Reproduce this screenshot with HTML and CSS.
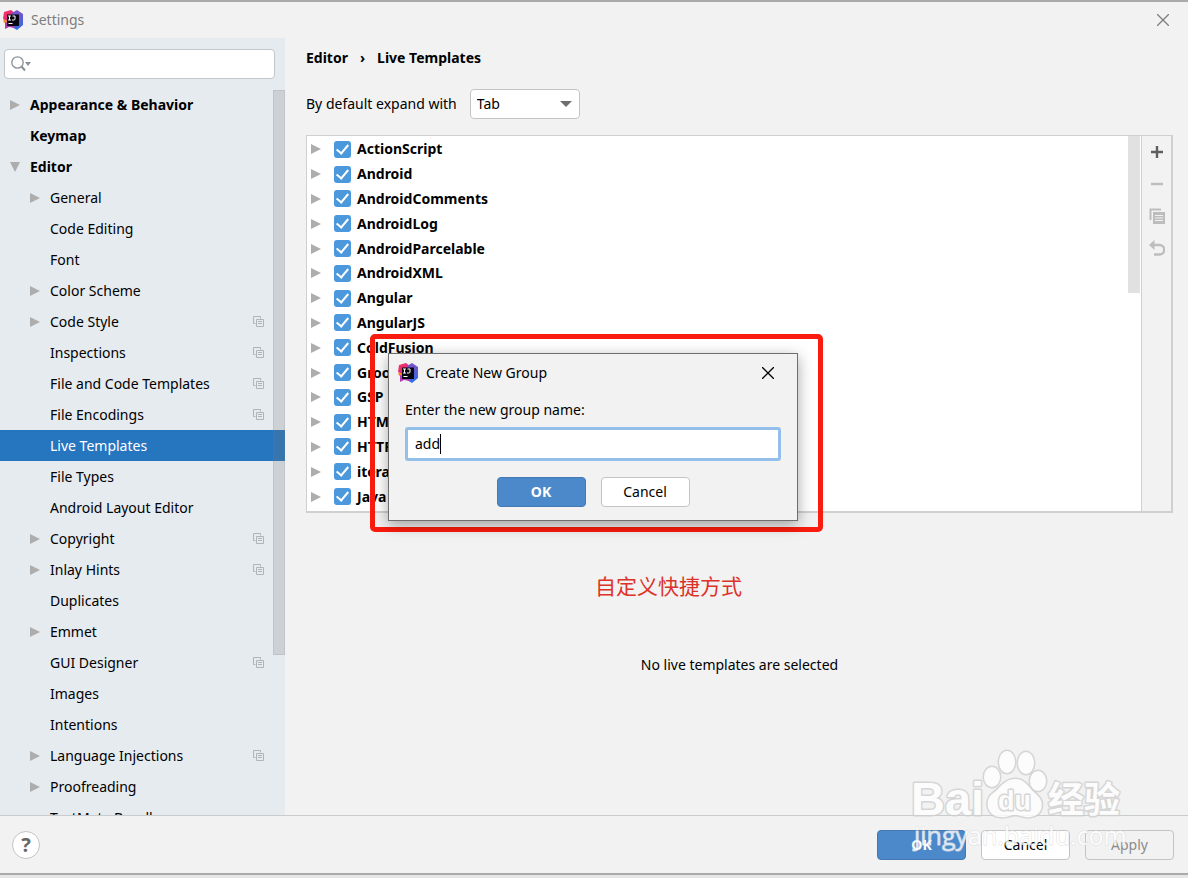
FILE: index.html
```html
<!DOCTYPE html>
<html lang="en">
<head>
<meta charset="utf-8">
<title>Settings</title>
<link rel="stylesheet" href="styles.css">
</head>
<body>
<svg class="defs" aria-hidden="true">
  <defs>
    <linearGradient id="flame" x1="0" y1="0" x2="1" y2="1"><stop offset="0" stop-color="#ff3158"/><stop offset="1" stop-color="#c62a9b"/></linearGradient>
    <linearGradient id="sea" x1="0" y1="0" x2="0" y2="1"><stop offset="0" stop-color="#7d50c8"/><stop offset="1" stop-color="#2d6fe6"/></linearGradient>
  </defs>
  <symbol id="logo" viewBox="0 0 20 20">
    <path d="M0 11 3 7 6 12 4 16Z" fill="#f98a2b"/>
    <path d="M1 2 8 0 13 4 7 12 0 9Z" fill="url(#flame)"/>
    <path d="M9 3 14 0 20 4V15L14 20 9 17Z" fill="url(#sea)"/>
    <path d="M2 12 10 14 12 18 6 17 2 19Z" fill="#b238b5"/>
    <path d="M4 4.500h12v11.500H4z" fill="#080610"/>
    <path d="M5 6h3M6.500 6v4M5 10h3M9.500 6h2.500v3q0 1-1.200 1H9M5.500 13.500h4" fill="none" stroke="#fff" stroke-width="1"/>
  </symbol>
  <symbol id="right" viewBox="0 0 10 10"><path d="M0 0 10 5 0 10Z" fill="#adadad"/></symbol>
  <symbol id="down" viewBox="0 0 10 10"><path d="M0 0H10L5 10Z" fill="#adadad"/></symbol>
  <symbol id="copy" viewBox="0 0 11 11"><path d="M2.500 7.500H.500V.500H7.500V2.500M3.500 3.500h7v7h-7zM5 5.500h4M5 7.500h4" fill="none" stroke="#adb4ba"/></symbol>
  <symbol id="close" viewBox="0 0 12 12"><path d="M0 0 12 12M12 0 0 12" fill="none" stroke="currentColor" stroke-width="1.300"/></symbol>
</svg>

<div class="window">
  <header class="titlebar">
    <svg class="logo"><use href="#logo"/></svg>
    <h1>Settings</h1>
    <button class="close" aria-label="Close settings"><svg><use href="#close"/></svg></button>
  </header>

  <div class="body">
    <aside class="sidebar">
      <div class="search">
        <svg viewBox="0 0 20 16" aria-hidden="true"><circle cx="6.500" cy="6.500" r="5.700" fill="none" stroke="#8a9299" stroke-width="1.300"/><path d="M10.500 10.500 14 14.500" stroke="#8a9299" stroke-width="2"/><path d="M14 6h6l-3 4z" fill="#8a9299"/></svg>
        <input type="text" aria-label="Search settings">
      </div>
      <div class="tree-area">
        <ul class="tree">
          <li class="top"><svg class="arrow"><use href="#right"/></svg>Appearance &amp; Behavior</li>
          <li class="top"><i class="arrow"></i>Keymap</li>
          <li class="top"><svg class="arrow"><use href="#down"/></svg>Editor</li>
          <li><svg class="arrow"><use href="#right"/></svg>General</li>
          <li><i class="arrow"></i>Code Editing</li>
          <li><i class="arrow"></i>Font</li>
          <li><svg class="arrow"><use href="#right"/></svg>Color Scheme</li>
          <li><svg class="arrow"><use href="#right"/></svg>Code Style<svg class="copy"><use href="#copy"/></svg></li>
          <li><i class="arrow"></i>Inspections<svg class="copy"><use href="#copy"/></svg></li>
          <li><i class="arrow"></i>File and Code Templates<svg class="copy"><use href="#copy"/></svg></li>
          <li><i class="arrow"></i>File Encodings<svg class="copy"><use href="#copy"/></svg></li>
          <li class="selected"><i class="arrow"></i>Live Templates</li>
          <li><i class="arrow"></i>File Types</li>
          <li><i class="arrow"></i>Android Layout Editor</li>
          <li><svg class="arrow"><use href="#right"/></svg>Copyright<svg class="copy"><use href="#copy"/></svg></li>
          <li><svg class="arrow"><use href="#right"/></svg>Inlay Hints<svg class="copy"><use href="#copy"/></svg></li>
          <li><i class="arrow"></i>Duplicates</li>
          <li><svg class="arrow"><use href="#right"/></svg>Emmet</li>
          <li><i class="arrow"></i>GUI Designer<svg class="copy"><use href="#copy"/></svg></li>
          <li><i class="arrow"></i>Images</li>
          <li><i class="arrow"></i>Intentions</li>
          <li><svg class="arrow"><use href="#right"/></svg>Language Injections<svg class="copy"><use href="#copy"/></svg></li>
          <li><svg class="arrow"><use href="#right"/></svg>Proofreading</li>
          <li><i class="arrow"></i>TextMate Bundles</li>
        </ul>
        <div class="thumb"></div>
      </div>
    </aside>

    <main class="content">
      <h2 class="crumbs"><span>Editor</span><span class="sep">›</span><span>Live Templates</span></h2>
      <div class="expand">
        <label for="expand">By default expand with</label>
        <div class="select">
          <select id="expand"><option>Tab</option><option>Enter</option><option>Space</option></select>
          <svg viewBox="0 0 12 6" aria-hidden="true"><path d="M0 0H12L6 6Z" fill="#6e6e6e"/></svg>
        </div>
      </div>
      <section class="panel">
        <ul class="templates">
          <li><svg class="arrow"><use href="#right"/></svg><label><input type="checkbox" checked>ActionScript</label></li>
          <li><svg class="arrow"><use href="#right"/></svg><label><input type="checkbox" checked>Android</label></li>
          <li><svg class="arrow"><use href="#right"/></svg><label><input type="checkbox" checked>AndroidComments</label></li>
          <li><svg class="arrow"><use href="#right"/></svg><label><input type="checkbox" checked>AndroidLog</label></li>
          <li><svg class="arrow"><use href="#right"/></svg><label><input type="checkbox" checked>AndroidParcelable</label></li>
          <li><svg class="arrow"><use href="#right"/></svg><label><input type="checkbox" checked>AndroidXML</label></li>
          <li><svg class="arrow"><use href="#right"/></svg><label><input type="checkbox" checked>Angular</label></li>
          <li><svg class="arrow"><use href="#right"/></svg><label><input type="checkbox" checked>AngularJS</label></li>
          <li><svg class="arrow"><use href="#right"/></svg><label><input type="checkbox" checked>ColdFusion</label></li>
          <li><svg class="arrow"><use href="#right"/></svg><label><input type="checkbox" checked>Groovy</label></li>
          <li><svg class="arrow"><use href="#right"/></svg><label><input type="checkbox" checked>GSP</label></li>
          <li><svg class="arrow"><use href="#right"/></svg><label><input type="checkbox" checked>HTML</label></li>
          <li><svg class="arrow"><use href="#right"/></svg><label><input type="checkbox" checked>HTTP</label></li>
          <li><svg class="arrow"><use href="#right"/></svg><label><input type="checkbox" checked>iterations</label></li>
          <li><svg class="arrow"><use href="#right"/></svg><label><input type="checkbox" checked>Java</label></li>
        </ul>
        <div class="track"><div class="list-thumb"></div></div>
        <div class="tools">
          <button aria-label="Add"><svg viewBox="0 0 16 16"><path d="M8 2v12M2 8h12" stroke="#5f5f5f" stroke-width="2.400"/></svg></button>
          <button aria-label="Remove"><svg viewBox="0 0 16 16"><path d="M2 8h12" stroke="#bdbdbd" stroke-width="2.400"/></svg></button>
          <button aria-label="Duplicate"><svg viewBox="0 0 16 16"><path d="M1.500 12V1.500H12" fill="none" stroke="#bdbdbd" stroke-width="2"/><path d="M4 4h12v12H4z" fill="#bdbdbd"/><path d="M6 7.500h8M6 10h8M6 12.500h8" stroke="#f2f2f2"/></svg></button>
          <button aria-label="Revert"><svg viewBox="0 0 16 16"><path d="M3 5h7.500a4.500 4.500 0 0 1 0 9.500H5" fill="none" stroke="#bdbdbd" stroke-width="2.400"/><path d="M0 5 5.500 0v10Z" fill="#bdbdbd"/></svg></button>
        </div>
      </section>
      <p class="empty">No live templates are selected</p>
    </main>
  </div>

  <footer class="footer">
    <button class="help" aria-label="Help">?</button>
    <button class="btn primary">OK</button>
    <button class="btn">Cancel</button>
    <button class="btn" disabled>Apply</button>
  </footer>
  <div class="desktop"></div>

  <div class="highlight">
    <div class="dialog" role="dialog" aria-labelledby="dialog-title">
      <header class="dialog-head">
        <svg class="logo"><use href="#logo"/></svg>
        <h2 id="dialog-title">Create New Group</h2>
        <button class="close" aria-label="Close dialog"><svg><use href="#close"/></svg></button>
      </header>
      <label for="group">Enter the new group name:</label>
      <div class="field"><input id="group" type="text" value="add"><i class="caret"></i></div>
      <div class="actions">
        <button class="btn primary">OK</button>
        <button class="btn">Cancel</button>
      </div>
    </div>
  </div>
  <p class="caption" lang="zh">自定义快捷方式</p>

  <svg class="watermark" viewBox="0 0 220 110" aria-label="Baidu">
    <g fill="#fff" stroke="#cfcfcf" stroke-width="3" paint-order="stroke" stroke-linejoin="round">
      <text x="-1" y="67" class="wm-bold">Bai</text>
      <ellipse cx="80" cy="29" rx="8" ry="10"/>
      <ellipse cx="95" cy="14" rx="8" ry="11"/>
      <ellipse cx="114" cy="15" rx="8" ry="11"/>
      <ellipse cx="126" cy="33" rx="8" ry="10"/>
      <path d="M103 31C92 31 89 40 80 46 72 53 75 69 89 69 95 70 98 67 103 67S112 70 118 69C131 68 133 54 125 47 116 40 114 31 103 31Z"/>
      <text x="86" y="62" class="wm-du">du</text>
      <text x="136" y="65" class="wm-cjk">经验</text>
    </g>
    <text x="2" y="97" class="wm-url">jingyan.baidu.com</text>
  </svg>
</div>
</body>
</html>
```
FILE: styles.css
```css
* { box-sizing: border-box; }

body {
  margin: 0;
  background: #f2f2f2;
  color: #000;
  font: 14px/20px "Noto Sans", "Open Sans", sans-serif;
}

h1, h2, p, ul { margin: 0; padding: 0; font-size: inherit; font-weight: normal; }
ul { list-style: none; }
button, input, select { font: inherit; color: inherit; }
button { padding: 0; border: 0; background: none; }
svg { display: block; flex: none; }
.defs { position: absolute; width: 0; height: 0; }

.window {
  position: relative;
  display: flex;
  flex-direction: column;
  height: 100vh;
  overflow: hidden;
  border-top: 2px solid #a9aaaa;
}

.titlebar {
  display: flex;
  align-items: center;
  flex: none;
  height: 36px;
  padding: 0 19px 0 3px;
  color: #7e7e7e;
}
.logo { width: 20px; height: 20px; margin-right: 8px; }
.close { margin-left: auto; }
.close svg { width: 12px; height: 12px; }

.body { display: flex; flex: 1; min-height: 0; }

.sidebar {
  display: flex;
  flex-direction: column;
  flex: none;
  width: 285px;
  padding-top: 11px;
  background: #e6ebf0;
}
.search {
  display: flex;
  align-items: center;
  flex: none;
  height: 30px;
  margin: 0 10px 10px 4px;
  padding-left: 6px;
  border: 1px solid #c3c6c9;
  border-radius: 4px;
  background: #fff;
}
.search svg { width: 20px; height: 16px; }
.search input { flex: 1; min-width: 0; border: 0; outline: 0; background: none; }

.tree-area { position: relative; flex: 1; min-height: 0; overflow: hidden; }
.tree li {
  display: flex;
  align-items: center;
  height: 31px;
  padding: 0 21px 0 30px;
}
.tree .top { padding-left: 10px; font-weight: 700; }
.tree .selected { background: #2675bf; color: #fff; }
.arrow { flex: none; width: 10px; height: 10px; margin-right: 10px; }
.copy { width: 11px; height: 11px; margin-left: auto; }
.thumb {
  position: absolute;
  top: 1px;
  right: 0;
  width: 12px;
  height: 565px;
  border: 1px solid rgba(120, 120, 120, .15);
  background: rgba(120, 120, 120, .22);
}

.content { flex: 1; min-width: 0; padding: 10px 15px 0 21px; }
.crumbs { display: flex; gap: 12px; font-weight: 700; }
.expand { display: flex; align-items: center; gap: 13px; margin: 21px 0 16px; }
.select { position: relative; width: 110px; }
.select select {
  display: block;
  width: 100%;
  height: 30px;
  padding: 0 6px;
  border: 1px solid #c4c4c4;
  border-radius: 4px;
  background: #fff;
  appearance: none;
}
.select svg {
  position: absolute;
  top: 12px;
  right: 8px;
  width: 12px;
  height: 6px;
  pointer-events: none;
}

.panel { display: flex; border: 1px solid #d0d0d0; border-width: 1px 2px 2px 1px; background: #fff; }
.templates {
  display: grid;
  grid-auto-rows: 1fr;
  flex: 1;
  height: 375px;
  padding: 1px 0 2px 4px;
  font-weight: 700;
}
.templates li { display: flex; align-items: center; }
.templates .arrow { margin-right: 13px; }
.templates label { display: flex; align-items: center; gap: 6px; }
.templates input {
  display: grid;
  place-items: center;
  width: 17px;
  height: 17px;
  margin: 0;
  border-radius: 3px;
  background: #4b98dc;
  appearance: none;
}
.templates input:checked::after {
  content: "";
  width: 5px;
  height: 10px;
  margin-bottom: 3px;
  border: solid #fff;
  border-width: 0 2px 2px 0;
  transform: rotate(40deg);
}
.track { width: 13px; }
.list-thumb { width: 12px; height: 157px; background: #e1e1e1; }
.tools {
  display: flex;
  flex-direction: column;
  align-items: center;
  gap: 16px;
  width: 30px;
  padding-top: 8px;
  border-left: 1px solid #d0d0d0;
  background: #f2f2f2;
}
.tools svg { width: 16px; height: 16px; }
.empty { margin-top: 142px; text-align: center; }

.footer {
  display: flex;
  align-items: center;
  flex: none;
  gap: 15px;
  height: 58px;
  padding: 0 14px 0 12px;
  border-top: 1px solid #c9cbcd;
}
.help {
  width: 28px;
  height: 28px;
  margin-right: auto;
  border: 1px solid #c4c4c4;
  border-radius: 50%;
  background: #fff;
  color: #666;
  font-size: 20px;
  font-weight: 700;
  line-height: 24px;
}
.btn {
  width: 89px;
  height: 30px;
  border: 1px solid #c4c4c4;
  border-radius: 4px;
  background: #fff;
}
.btn.primary { border-color: #4479b3; background: #4c89ca; color: #fff; font-weight: 700; }
.btn:disabled { background: none; color: #8c8c8c; }
.desktop { flex: none; height: 5px; border-top: 2px solid #a9aaaa; background: #e6e6e6; }

.highlight {
  position: absolute;
  top: 332px;
  left: 370px;
  padding: 14px 20px 6px 13px;
  border: 5px solid #fa1c0e;
  border-radius: 5px;
}
.dialog {
  width: 410px;
  padding: 0 16px 13px;
  border: 1px solid #6e6e6e;
  background: #f2f2f2;
  box-shadow: 0 4px 14px rgba(0, 0, 0, .35);
}
.dialog-head { display: flex; align-items: center; height: 38px; margin-left: -7px; padding-right: 7px; }
.dialog > label { display: block; margin: 7px 0 6px; line-height: 22px; }
.field {
  display: flex;
  align-items: center;
  height: 34px;
  padding-left: 7px;
  border: 3px solid #94bfea;
  border-radius: 3px;
  background: #fff;
}
.field input { width: 25px; padding: 0; border: 0; outline: 0; background: none; }
.caret { width: 1px; height: 20px; background: #000; }
.actions { display: flex; justify-content: center; gap: 15px; margin-top: 16px; }

.caption {
  position: absolute;
  top: 568px;
  left: 595px;
  color: #dc3228;
  font: 21px/30px "Noto Sans CJK SC", sans-serif;
}

.watermark {
  position: absolute;
  right: 56px;
  bottom: 20px;
  width: 220px;
  height: 110px;
  overflow: visible;
  opacity: .8;
  pointer-events: none;
}
.wm-bold { font: 700 47px "Liberation Sans", sans-serif; }
.wm-du { font: 700 27px "Liberation Sans", sans-serif; }
.wm-cjk { font: 700 36px "Noto Sans CJK SC", sans-serif; }
.wm-url { fill: #fff; stroke: #d8d8d8; stroke-width: 1px; paint-order: stroke; font: 25px "Open Sans", sans-serif; }
```
